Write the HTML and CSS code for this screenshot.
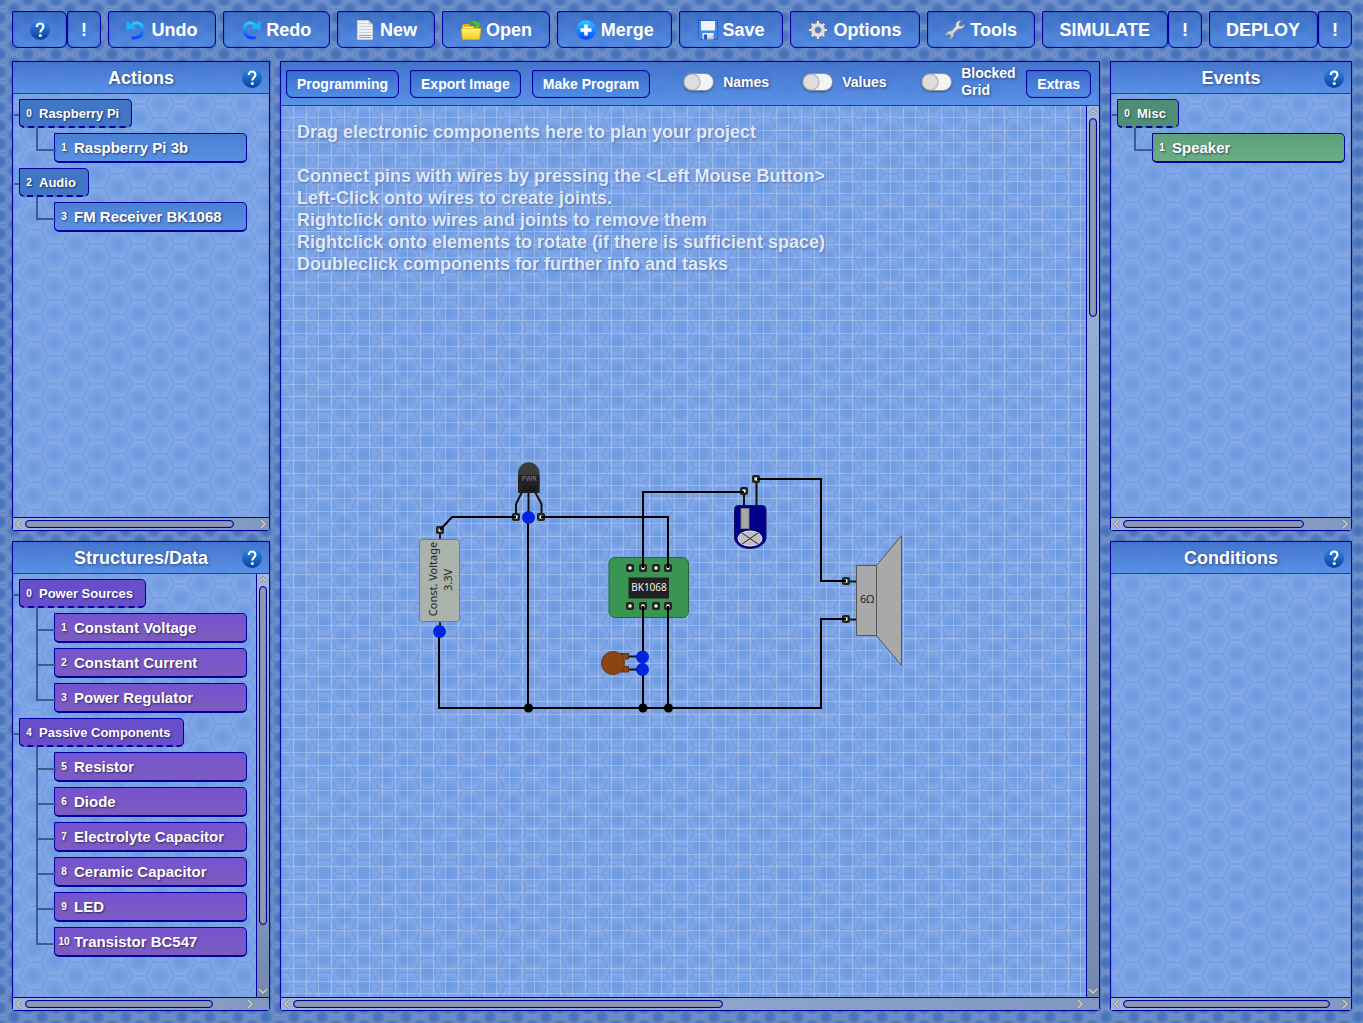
FILE: index.html
```html
<!DOCTYPE html>
<html lang="en">
<head>
<meta charset="utf-8">
<title>Electronics Planner</title>
<link rel="stylesheet" href="styles.css">
</head>
<body>
<svg class="defs" aria-hidden="true">
  <defs>
    <linearGradient id="help-fill" x1="0" y1="0" x2="0" y2="1"><stop offset="0" stop-color="#2f8ae8"/><stop offset="1" stop-color="#0a3f9f"/></linearGradient>
    <linearGradient id="arrow-fill" x1="0" y1="0" x2="0" y2="1"><stop offset="0" stop-color="#22d0ff"/><stop offset="1" stop-color="#0a45ff"/></linearGradient>
    <linearGradient id="folder-fill" x1="0" y1="0" x2="0" y2="1"><stop offset="0" stop-color="#fff27a"/><stop offset="1" stop-color="#f5cd1c"/></linearGradient>
    <linearGradient id="metal-fill" x1="0" y1="0" x2="0" y2="1"><stop offset="0" stop-color="#f6f6f6"/><stop offset="1" stop-color="#b9bec6"/></linearGradient>
    <symbol id="i-help" viewBox="0 0 20 20">
      <circle cx="10" cy="10" r="10" fill="url(#help-fill)"/>
      <path d="M6.800 7C7 4.300 8.300 3.500 10 3.500c2.100 0 3.400 1.300 3.400 3.200 0 2.600-3.100 2.900-3.100 5.800" fill="none" stroke="#fff" stroke-width="2.200"/>
      <circle cx="10.300" cy="15.500" r="1.500" fill="#fff"/>
    </symbol>
    <symbol id="i-undo" viewBox="0 0 20 20">
      <path d="M6 5.500C10 .5 17 3 16.800 10c-.2 6-5.500 9-11.300 7.500" fill="none" stroke="url(#arrow-fill)" stroke-width="3"/>
      <path d="M.5.8V10.500L3 8.800 10.500 9.300 5.500 4.500Z" fill="#1cb4ff"/>
    </symbol>
    <symbol id="i-new" viewBox="0 0 20 20">
      <path d="M2.500.5h11l4 4v15h-15z" fill="#eef2f6" stroke="#c3cad3"/>
      <path d="M13.500.5v4h4z" fill="#b9c3cf"/>
      <path d="M4 3.500h8M4 6.500h12M4 9.500h12M4 12.500h12" stroke="#c9d2dc"/>
      <path d="M4 15.500h12M4 17.500h12" stroke="#8ea2be"/>
    </symbol>
    <symbol id="i-open" viewBox="0 0 20 20">
      <path d="M1 19V5.500L2.500 4H8l1.500 2H18v13z" fill="#e2b512"/>
      <path d="M2 7h15v4H2z" fill="#fffbe0"/>
      <path d="M0 8.500h20L18.500 19.500H1.500z" fill="url(#folder-fill)" stroke="#dca90c" stroke-width=".7"/>
      <path d="M8 3.500C11-.5 15 0 16.500 2.500L19 1v6.500h-6.500l2-2C13 3.500 11 2.500 8 3.500z" fill="#4cc13c" stroke="#258a22" stroke-width=".5"/>
    </symbol>
    <symbol id="i-merge" viewBox="0 0 20 20">
      <circle cx="10" cy="10" r="9.800" fill="url(#arrow-fill)"/>
      <path d="M8.200 4.500h3.600v3.700h3.700v3.600h-3.700v3.700H8.200v-3.700H4.500V8.200h3.700z" fill="#fff"/>
    </symbol>
    <symbol id="i-save" viewBox="0 0 20 20">
      <path d="M.5.500h19v19h-17l-2-2z" fill="#3d87ee" stroke="#2a62c0"/>
      <path d="M3 1h14v9.500H3z" fill="#f1f5fb"/>
      <path d="M4.500 13h11v6.500h-11z" fill="url(#metal-fill)"/>
      <path d="M6 14.500h3v5H6z" fill="#2559b5"/>
    </symbol>
    <symbol id="i-options" viewBox="0 0 20 20">
      <path d="M10 .3v19.400M.3 10h19.400M3.200 3.200l13.600 13.600M16.800 3.200 3.200 16.800" stroke="#6d7078" stroke-width="3.400"/>
      <path d="M10 .9v18.200M.9 10h18.200M3.700 3.700l12.600 12.600M16.300 3.700 3.700 16.300" stroke="#e8e9ec" stroke-width="2.200"/>
      <circle cx="10" cy="10" r="5" fill="#5a85cf" stroke="#dcdde0" stroke-width="4"/>
      <circle cx="10" cy="10" r="3" fill="#4f80d4" stroke="#85888e"/>
    </symbol>
    <symbol id="i-tools" viewBox="0 0 20 20">
      <path d="M19.300 4.200 16.500 6.300 14.200 5.800 13.900 3.700 16.300 1C13 .2 10.300 2.500 10.900 6.200L6.500 10.900C3 10.500.5 13 .8 15.900L3.300 14.300 5.500 15 5.600 17.100 3.800 19.200C7 19.600 9.200 17 8.800 13.500L13.200 8.900C17 9.500 19.800 7.500 19.300 4.200Z" fill="url(#metal-fill)" stroke="#7d8590" stroke-width=".8"/>
    </symbol>
    <symbol id="i-chevron" viewBox="0 0 12 12">
      <path d="M8 2 4 6l4 4" fill="none" stroke="#7d848f" stroke-width="3"/>
      <path d="M8 2 4 6l4 4" fill="none" stroke="#cfcfcf" stroke-width="1.500"/>
    </symbol>
    <symbol id="pin" viewBox="0 0 8 8">
      <rect width="8" height="8" rx="2" fill="#222"/>
      <rect x="2.500" y="2.500" width="3" height="3" fill="#fff"/>
    </symbol>
  </defs>
</svg>

<nav class="toolbar" aria-label="Main">
  <div class="pair">
    <button class="btn help-btn" aria-label="Help"><svg class="icon"><use href="#i-help"/></svg></button>
    <button class="btn bang">!</button>
  </div>
  <button class="btn wide"><svg class="icon"><use href="#i-undo"/></svg>Undo</button>
  <button class="btn wide"><svg class="icon flip"><use href="#i-undo"/></svg>Redo</button>
  <button class="btn wide"><svg class="icon"><use href="#i-new"/></svg>New</button>
  <button class="btn wide"><svg class="icon"><use href="#i-open"/></svg>Open</button>
  <button class="btn wide"><svg class="icon"><use href="#i-merge"/></svg>Merge</button>
  <button class="btn wide"><svg class="icon"><use href="#i-save"/></svg>Save</button>
  <button class="btn wide"><svg class="icon"><use href="#i-options"/></svg>Options</button>
  <button class="btn wide"><svg class="icon"><use href="#i-tools"/></svg>Tools</button>
  <div class="pair">
    <button class="btn run">SIMULATE</button>
    <button class="btn bang">!</button>
  </div>
  <div class="pair">
    <button class="btn run">DEPLOY</button>
    <button class="btn bang">!</button>
  </div>
</nav>

<main class="workspace">
  <div class="column">
    <section class="panel blue">
      <header class="panel-head"><h2>Actions</h2><button class="help" aria-label="Help on actions"><svg class="icon"><use href="#i-help"/></svg></button></header>
      <div class="panel-body">
        <ul class="tree">
          <li class="group"><span class="num">0</span>Raspberry Pi</li>
          <li class="item"><span class="num">1</span>Raspberry Pi 3b</li>
          <li class="group"><span class="num">2</span>Audio</li>
          <li class="item"><span class="num">3</span>FM Receiver BK1068</li>
        </ul>
      </div>
      <div class="hbar"><svg class="arrow"><use href="#i-chevron"/></svg><div class="track"><div class="thumb" style="width:90%"></div></div><svg class="arrow flip"><use href="#i-chevron"/></svg></div>
    </section>
    <section class="panel purple">
      <header class="panel-head"><h2>Structures/Data</h2><button class="help" aria-label="Help on structures"><svg class="icon"><use href="#i-help"/></svg></button></header>
      <div class="panel-body">
        <ul class="tree">
          <li class="group"><span class="num">0</span>Power Sources</li>
          <li class="item"><span class="num">1</span>Constant Voltage</li>
          <li class="item"><span class="num">2</span>Constant Current</li>
          <li class="item"><span class="num">3</span>Power Regulator</li>
          <li class="group"><span class="num">4</span>Passive Components</li>
          <li class="item"><span class="num">5</span>Resistor</li>
          <li class="item"><span class="num">6</span>Diode</li>
          <li class="item"><span class="num">7</span>Electrolyte Capacitor</li>
          <li class="item"><span class="num">8</span>Ceramic Capacitor</li>
          <li class="item"><span class="num">9</span>LED</li>
          <li class="item"><span class="num">10</span>Transistor BC547</li>
        </ul>
        <div class="vbar"><svg class="arrow up"><use href="#i-chevron"/></svg><div class="track"><div class="thumb" style="height:85%"></div></div><svg class="arrow down"><use href="#i-chevron"/></svg></div>
      </div>
      <div class="hbar cornered"><svg class="arrow"><use href="#i-chevron"/></svg><div class="track"><div class="thumb" style="width:86%"></div></div><svg class="arrow flip"><use href="#i-chevron"/></svg></div>
    </section>
  </div>

  <section class="panel planner">
    <header class="plan-head">
      <button class="btn small">Programming</button>
      <button class="btn small">Export Image</button>
      <button class="btn small">Make Program</button>
      <div class="switches">
        <label class="switch"><input type="checkbox">Names</label>
        <label class="switch"><input type="checkbox">Values</label>
        <label class="switch"><input type="checkbox">Blocked Grid</label>
      </div>
      <button class="btn small">Extras</button>
    </header>
    <div class="panel-body">
      <div class="canvas">
        <p class="hint">Drag electronic components here to plan your project<br><br>Connect pins with wires by pressing the &lt;Left Mouse Button&gt;<br>Left-Click onto wires to create joints.<br>Rightclick onto wires and joints to remove them<br>Rightclick onto elements to rotate (if there is sufficient space)<br>Doubleclick components for further info and tasks</p>
        <svg class="circuit" role="img" aria-label="Circuit">
          <g transform="translate(-281 -106)">
            <!-- voltage source -->
            <path d="M440 530v102" stroke="#222" stroke-width="2"/>
            <rect x="419.500" y="539.500" width="40" height="82" rx="3" fill="#a9b3ac" stroke="#75807c"/>
            <text class="part dark" transform="translate(437 579) rotate(-90)">Const. Voltage</text>
            <text class="part dark" transform="translate(452 580) rotate(-90)">3.3V</text>
            <!-- regulator -->
            <path d="M522 492 516 504v12M535 492l6.500 12v12M528.500 492v24" fill="none" stroke="#111" stroke-width="2"/>
            <path d="M518 493V473a10.500 10.500 0 0 1 21.500 0v20z" fill="#3b3b3b"/>
            <path d="M518 475h21.500v18H518z" fill="#222"/>
            <text class="part tiny" x="529" y="481" fill="#888">PWR</text>
            <text class="part tiny" x="529" y="491" fill="#0a0a0a">3.3V</text>
            <!-- receiver board -->
            <rect x="609" y="557.500" width="79.500" height="60" rx="6" fill="#3a9452" stroke="#1f6a3a"/>
            <rect x="628.500" y="577.500" width="40.500" height="21" fill="#222"/>
            <text class="part chip" x="649" y="591" fill="#f2f2f2">BK1068</text>
            <!-- ceramic capacitor -->
            <path d="M622 656.500h20M622 669.500h20" stroke="#111" stroke-width="2"/>
            <path d="M620 653.500h8.500v5.500H620zM620 666.500h8.500v5.500H620z" fill="#8b4513" stroke="#5b3010"/>
            <circle cx="613" cy="663" r="11.500" fill="#8b4513" stroke="#6a3a18"/>
            <!-- electrolyte capacitor -->
            <path d="M744 492v16M756.500 479v28" stroke="#111" stroke-width="2"/>
            <path d="M738 505.500h24q4 0 4 4v28c0 6-7 11-16 11s-15.500-5-15.500-11v-28q0-4 3.500-4z" fill="#00008b" stroke="#10106a"/>
            <rect x="741" y="508.500" width="8" height="20" fill="#a9a9a9" stroke="#777"/>
            <ellipse cx="750" cy="538.500" rx="12" ry="7.500" fill="#c0c0c0" stroke="#eee"/>
            <path d="M742 533l16 11M758 533l-16 11" stroke="#222"/>
            <!-- speaker -->
            <path d="M846 581.500h10M846 619.500h10" stroke="#111" stroke-width="2"/>
            <path d="M856.500 565.500h20L901.500 535.500v130L876.500 635.500h-20zM876.500 565.500v70" fill="#a9a9a9" stroke="#555"/>
            <text class="part dark" x="867" y="603">6Ω</text>
            <!-- pins -->
            <use href="#pin" x="436" y="526" width="8" height="8"/>
            <use href="#pin" x="512" y="513" width="8" height="8"/>
            <use href="#pin" x="537" y="513" width="8" height="8"/>
            <use href="#pin" x="740" y="487" width="8" height="8"/>
            <use href="#pin" x="752" y="475" width="8" height="8"/>
            <use href="#pin" x="842" y="577" width="8" height="8"/>
            <use href="#pin" x="842" y="615" width="8" height="8"/>
            <use href="#pin" x="626" y="564" width="8" height="8"/>
            <use href="#pin" x="639" y="564" width="8" height="8"/>
            <use href="#pin" x="652" y="564" width="8" height="8"/>
            <use href="#pin" x="664" y="564" width="8" height="8"/>
            <use href="#pin" x="626" y="602" width="8" height="8"/>
            <use href="#pin" x="639" y="602" width="8" height="8"/>
            <use href="#pin" x="652" y="602" width="8" height="8"/>
            <use href="#pin" x="664" y="602" width="8" height="8"/>
            <!-- wires -->
            <g fill="none" stroke="#000" stroke-width="2">
              <path d="M440 530l12-13h64M541 517h127v51M643 568v-76h101M757 479h64v102h25M846 619h-25v89H439v-76M528 517v191M643 606v102M668 606v102"/>
            </g>
            <g fill="#000"><circle cx="528.500" cy="708" r="4.500"/><circle cx="643" cy="708" r="4.500"/><circle cx="668.500" cy="708" r="4.500"/></g>
            <g fill="#0023e0"><circle cx="528.500" cy="517.500" r="6.500"/><circle cx="439.500" cy="631.500" r="6.500"/><circle cx="642.500" cy="657" r="6.500"/><circle cx="642.500" cy="669.500" r="6.500"/></g>
          </g>
        </svg>
      </div>
      <div class="vbar"><svg class="arrow up"><use href="#i-chevron"/></svg><div class="track"><div class="thumb" style="height:23%"></div></div><svg class="arrow down"><use href="#i-chevron"/></svg></div>
    </div>
    <div class="hbar cornered"><svg class="arrow"><use href="#i-chevron"/></svg><div class="track"><div class="thumb" style="width:55%"></div></div><svg class="arrow flip"><use href="#i-chevron"/></svg></div>
  </section>

  <div class="column">
    <section class="panel green">
      <header class="panel-head"><h2>Events</h2><button class="help" aria-label="Help on events"><svg class="icon"><use href="#i-help"/></svg></button></header>
      <div class="panel-body">
        <ul class="tree">
          <li class="group"><span class="num">0</span>Misc</li>
          <li class="item"><span class="num">1</span>Speaker</li>
        </ul>
      </div>
      <div class="hbar"><svg class="arrow"><use href="#i-chevron"/></svg><div class="track"><div class="thumb" style="width:84%"></div></div><svg class="arrow flip"><use href="#i-chevron"/></svg></div>
    </section>
    <section class="panel">
      <header class="panel-head"><h2>Conditions</h2><button class="help" aria-label="Help on conditions"><svg class="icon"><use href="#i-help"/></svg></button></header>
      <div class="panel-body"></div>
      <div class="hbar"><svg class="arrow"><use href="#i-chevron"/></svg><div class="track"><div class="thumb" style="width:96%"></div></div><svg class="arrow flip"><use href="#i-chevron"/></svg></div>
    </section>
  </div>
</main>
</body>
</html>
```
FILE: styles.css
```css
:root {
  --line: #0000a0;
  --head: linear-gradient(rgba(52, 104, 196, 0.78), rgba(80, 141, 232, 0.78));
  --scales: url("data:image/svg+xml,%3Csvg xmlns='http://www.w3.org/2000/svg' width='28' height='18'%3E%3Cdefs%3E%3CradialGradient id='g'%3E%3Cstop offset='0' stop-color='%234270ba'/%3E%3Cstop offset='.5' stop-color='%235079bf'/%3E%3Cstop offset='.9' stop-color='%237695cb'/%3E%3C/radialGradient%3E%3C/defs%3E%3Crect width='28' height='18' fill='%237095d0'/%3E%3Cg fill='url(%23g)' stroke='%236186c4'%3E%3Cpath id='h' d='M5 9 10 0h8l5 9-5 9h-8z'/%3E%3Cuse href='%23h' x='-14' y='-9'/%3E%3Cuse href='%23h' x='-14' y='9'/%3E%3Cuse href='%23h' x='14' y='-9'/%3E%3Cuse href='%23h' x='14' y='9'/%3E%3C/g%3E%3C/svg%3E");
  --hexes: url("data:image/svg+xml,%3Csvg xmlns='http://www.w3.org/2000/svg' width='42' height='28'%3E%3Cdefs%3E%3CradialGradient id='g'%3E%3Cstop offset='0' stop-color='%236d9ae3'/%3E%3Cstop offset='.4' stop-color='%23739ee3'/%3E%3Cstop offset='.85' stop-color='%2383a8e7'/%3E%3C/radialGradient%3E%3C/defs%3E%3Crect width='42' height='28' fill='%237da5e7'/%3E%3Cg fill='url(%23g)' stroke='%23769ee2' stroke-width='2' stroke-linejoin='round'%3E%3Cpath id='h' d='M7 14 14 0h14l7 14-7 14H14z'/%3E%3Cuse href='%23h' x='-21' y='-14'/%3E%3Cuse href='%23h' x='-21' y='14'/%3E%3Cuse href='%23h' x='21' y='-14'/%3E%3Cuse href='%23h' x='21' y='14'/%3E%3C/g%3E%3C/svg%3E");
  --grid: url("data:image/svg+xml,%3Csvg xmlns='http://www.w3.org/2000/svg' width='127' height='127'%3E%3Cpath d='M0 .5h127M0 13.5h127M0 25.5h127M0 38.5h127M0 51.5h127M0 64.5h127M0 76.5h127M0 89.5h127M0 102.5h127M0 114.5h127M.5 0v127M13.5 0v127M25.5 0v127M38.5 0v127M51.5 0v127M64.5 0v127M76.5 0v127M89.5 0v127M102.5 0v127M114.5 0v127' stroke='white' stroke-opacity='.24'/%3E%3C/svg%3E");
}

* { box-sizing: border-box; }

body {
  margin: 0;
  min-height: 100vh;
  padding: 11px 11px 12px 12px;
  display: flex;
  flex-direction: column;
  gap: 13px;
  background: #5d87c8 var(--scales);
  color: #fff;
  font: bold 18px/22px "Liberation Sans", Arial, sans-serif;
}

.defs { position: absolute; width: 0; height: 0; }
.icon { width: 20px; height: 20px; flex: none; display: block; }
.flip { transform: scaleX(-1); }

.toolbar { display: flex; gap: 7px; }
.pair { display: flex; }
.wide { flex: 1 1 auto; }

.btn {
  height: 37px;
  padding: 0 16px;
  display: flex;
  align-items: center;
  justify-content: center;
  gap: 5px;
  border: 1px solid var(--line);
  border-radius: 2px 6px 6px 6px;
  background: var(--head);
  box-shadow: inset 0 0 1px var(--line);
  color: #fff;
  font: inherit;
  white-space: nowrap;
}
.help-btn { width: 55px; }
.run { padding-right: 17px; }
.bang { width: 34px; padding: 0; }
.small { height: 28px; padding: 0 10px; font-size: 14px; }

.workspace {
  flex: 1;
  display: grid;
  grid-template-columns: 258px minmax(0, 1fr) 242px;
  gap: 10px;
}
.column { display: grid; grid-template-rows: 1fr 1fr; gap: 10px; }

.panel {
  display: flex;
  flex-direction: column;
  min-width: 0;
  border: 1px solid var(--line);
  border-radius: 1px 1px 4px 4px;
  background: #799fe4 var(--hexes);
  box-shadow: inset 0 0 1px var(--line), 0 0 1px var(--line);
}

.panel-head, .plan-head {
  display: flex;
  align-items: center;
  border-bottom: 1px solid #1f3fae;
  background: var(--head);
  text-shadow: 1px 1px 3px rgba(0, 0, 50, 0.5);
}
.panel-head { height: 32px; padding: 0 7px 0 27px; }
.panel-head h2 { flex: 1; margin: 0; font: inherit; text-align: center; }
.help { padding: 0; border: 0; background: none; }

.panel-body { flex: 1; display: flex; min-height: 0; }

.tree { flex: 1; margin: 0; padding: 5px 6px; list-style: none; }
.tree li {
  position: relative;
  display: flex;
  align-items: center;
  border: 1px solid var(--line);
  border-radius: 1px 5px 5px 5px;
  text-shadow: 1px 1px 2px rgba(0, 0, 40, 0.6);
  white-space: nowrap;
}
.tree li + li { margin-top: 5px; }
.tree .group {
  width: max-content;
  height: 29px;
  padding: 1px 12px 0 0;
  border-bottom: 2px dashed var(--line);
  font-size: 13px;
}
.tree .item {
  width: 193px;
  height: 30px;
  margin-left: 35px;
  border-bottom-width: 2px;
  font-size: 15px;
}
.num { width: 19px; padding-right: 1px; font-size: 10px; text-align: center; }

.tree li::before { content: ""; position: absolute; border-bottom: 2px solid #3e5a90; }
.tree .group::before { left: -6px; top: 14px; width: 5px; }
.tree .item::before {
  left: -19px;
  top: -20px;
  width: 18px;
  height: 35px;
  border-left: 2px solid #3e5a90;
}
.tree .group + .item::before { top: -6px; height: 21px; }

.blue .group { background: #4076c4; }
.blue .item { background: linear-gradient(#4a80d2, #5890e2); }
.purple .group { background: #674fcb; }
.purple .item { background: linear-gradient(#7553cf, #7d5cc0); }
.green .group { background: #4f8d76; }
.green .item { background: linear-gradient(#5da07b, #6aae86); }

.hbar, .vbar { display: flex; flex: none; background: linear-gradient(90deg, #9db5dc, #8098c0); }
.hbar { height: 13px; border-top: 1px solid var(--line); }
.vbar { width: 13px; flex-direction: column; border-left: 1px solid var(--line); background: linear-gradient(#9db9e4, #7489ad); }
.cornered { padding-right: 13px; }
.arrow { width: 12px; height: 12px; flex: none; display: block; }
.up { transform: rotate(90deg); }
.down { transform: rotate(-90deg); }
.track { flex: 1; display: flex; min-width: 0; min-height: 0; }
.hbar .track { padding: 2px 0; }
.vbar .track { padding: 0 2px; }
.thumb { border: 1px solid var(--line); border-radius: 4px; background: #8e9ab0; box-shadow: inset 0 0 1px var(--line); }
.vbar .thumb { width: 100%; }

.plan-head { height: 44px; padding: 0 8px 0 5px; gap: 11px; }
.switches { flex: 1; display: flex; align-self: flex-start; padding-left: 22px; }
.switch {
  width: 119px;
  height: 40px;
  display: flex;
  align-items: center;
  gap: 9px;
  font-size: 14px;
  line-height: 17px;
}
.switch:last-child { width: 92px; }
.switch input {
  appearance: none;
  flex: none;
  width: 31px;
  height: 18px;
  margin: 0;
  border: 1px solid #8a94a8;
  border-radius: 9px;
  background: radial-gradient(circle at 8px 8px, #dedede 7px, #aaa 8px, #f4f4f4 9px);
  box-shadow: 0 1px 2px rgba(0, 0, 0, 0.4);
}

.canvas { position: relative; flex: 1; min-width: 0; background: 12px 11px var(--grid); overflow: hidden; }
.hint { margin: 0; padding: 15px 16px; color: #dfe9fb; text-shadow: 1px 1px 2px rgba(40, 70, 130, 0.5); }
.circuit { position: absolute; inset: 0; width: 100%; height: 100%; }
.part { font: normal 11px "Noto Sans", sans-serif; text-anchor: middle; }
.part.dark { fill: #222; }
.part.chip { font-size: 10px; }
.part.tiny { font-size: 7px; }
```
